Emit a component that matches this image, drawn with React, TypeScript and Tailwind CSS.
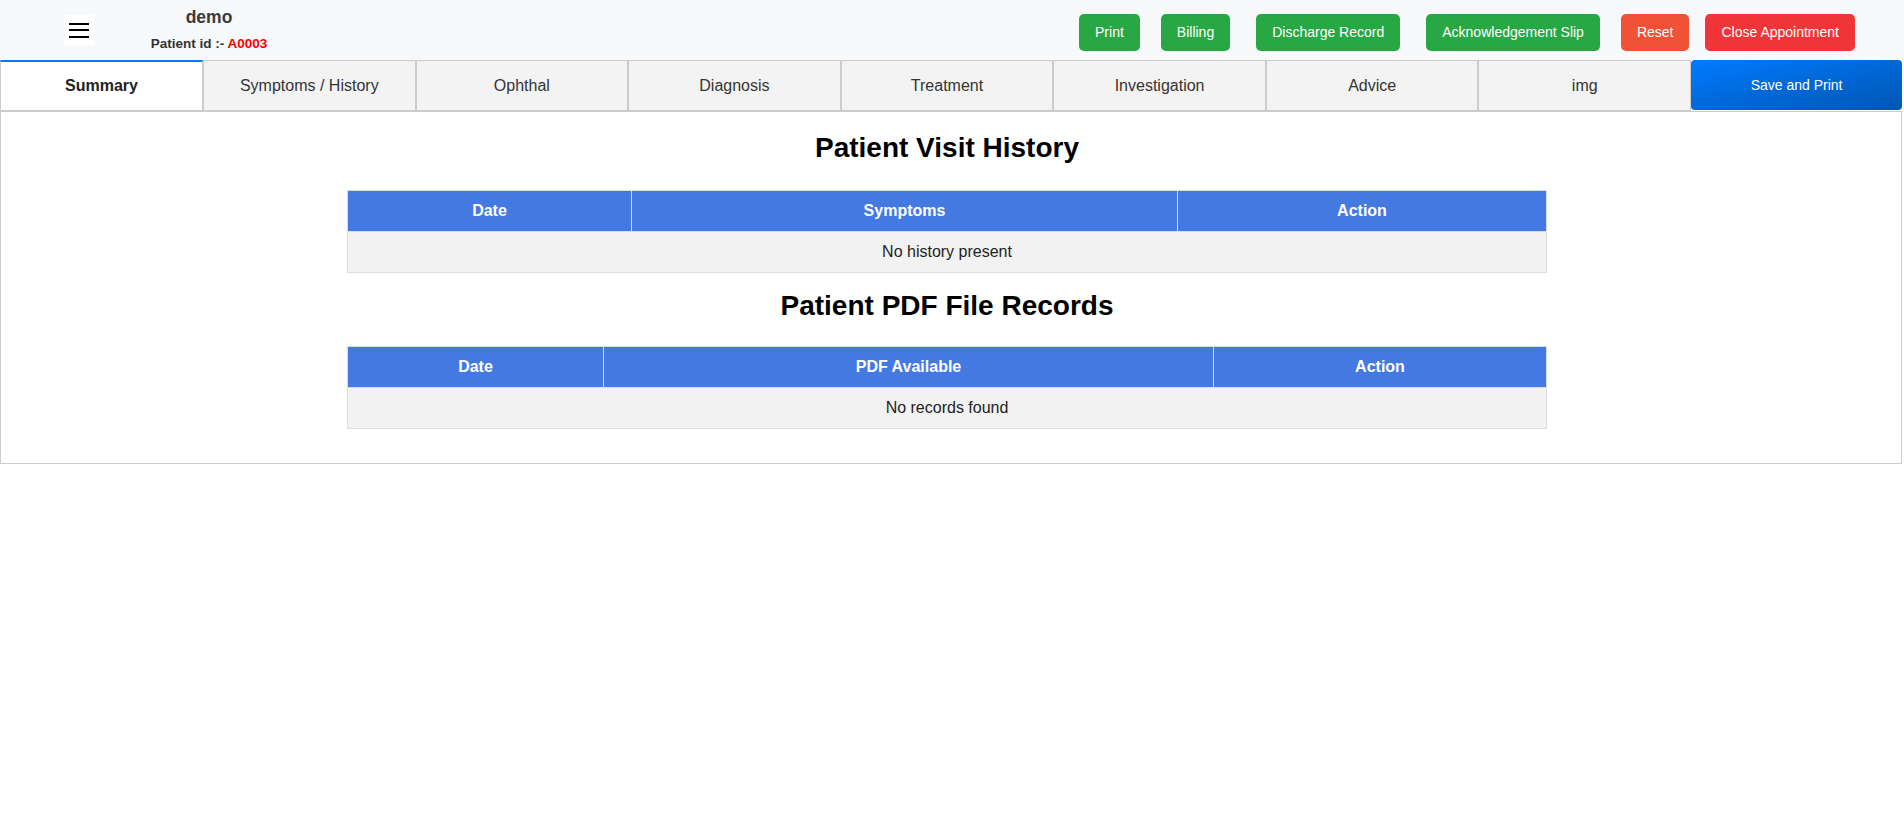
const tabs = ["Symptoms / History", "Ophthal", "Diagnosis", "Treatment", "Investigation", "Advice", "img"];

function HistoryTable({ cols, widths, empty }: { cols: string[]; widths: string[]; empty: string }) {
  return (
    <table className="mx-auto w-[1199px] table-fixed border-collapse border border-[#dddddd] text-[16px]">
      <thead>
        <tr className="h-[41px] bg-[#4479e1] text-white">
          {cols.map((c, i) => (
            <th key={c} className={`${widths[i]} border border-[#dddddd] font-bold`}>{c}</th>
          ))}
        </tr>
      </thead>
      <tbody>
        <tr className="h-[41px] bg-[#f2f2f2] text-[#222]">
          <td colSpan={3} className="border border-[#dddddd] text-center">{empty}</td>
        </tr>
      </tbody>
    </table>
  );
}

export default function App() {
  return (
    <div className="min-h-[817px] bg-white font-['Liberation_Sans',Arial,sans-serif]">
      {/* top bar */}
      <div className="flex h-[60px] bg-[#f8f9fa]">
        <button className="mt-[15px] ml-[64px] flex h-[30px] w-[30px] flex-col items-center justify-center gap-[4.5px] bg-white">
          <span className="block h-[2px] w-[20px] bg-black" />
          <span className="block h-[2px] w-[20px] bg-black" />
          <span className="block h-[2px] w-[20px] bg-black" />
        </button>
        <div className="ml-[40px] flex w-[150px] flex-col items-center pt-[6px]">
          <div className="text-[17.5px] leading-[22px] font-bold text-[#3a3a3a]">demo</div>
          <div className="mt-[8px] text-[13.5px] leading-[16px] font-bold text-[#333]">
            Patient id :- <span className="text-[#ff0000]">A0003</span>
          </div>
        </div>
        <div className="mt-[14px] ml-auto flex items-start pr-[49px] text-[14px] text-white">
          <button className="h-[37px] rounded-[5px] bg-[#28a745] px-4">Print</button>
          <button className="ml-[21px] h-[37px] rounded-[5px] bg-[#28a745] px-4">Billing</button>
          <button className="ml-[26px] h-[37px] rounded-[5px] bg-[#28a745] px-4">Discharge Record</button>
          <button className="ml-[26px] h-[37px] rounded-[5px] bg-[#28a745] px-4">Acknowledgement Slip</button>
          <button className="ml-[21px] h-[37px] rounded-[5px] bg-[#f05236] px-4">Reset</button>
          <button className="ml-[16px] h-[37px] rounded-[5px] bg-[#ef3537] px-4">Close Appointment</button>
        </div>
      </div>

      {/* tabs */}
      <div className="flex h-[51px] w-[1902px] text-[16px]">
        <div className="flex w-[203px] items-center justify-center border border-t-2 border-[#cccccc] border-t-[#007bff] bg-white font-bold text-[#222]">
          Summary
        </div>
        {tabs.map((t) => (
          <div key={t} className="flex flex-1 items-center justify-center border border-[#cccccc] bg-[#f3f3f3] text-[#333]">
            {t}
          </div>
        ))}
        <button className="h-[50px] w-[211px] rounded-[4px] bg-gradient-to-br from-[#007bff] to-[#0056b3] text-[14px] text-white">
          Save and Print
        </button>
      </div>

      {/* content */}
      <div className="w-[1902px] border border-[#cccccc] pt-[20px] pr-[8px] pb-[34px]">
        <h2 className="text-center text-[28px] leading-[32px] font-bold text-black">Patient Visit History</h2>
        <div className="mt-[26px]">
          <HistoryTable
            cols={["Date", "Symptoms", "Action"]}
            widths={["w-[284px]", "w-[546px]", "w-[369px]"]}
            empty="No history present"
          />
        </div>
        <h2 className="mt-[17px] text-center text-[28px] leading-[32px] font-bold text-black">Patient PDF File Records</h2>
        <div className="mt-[24px]">
          <HistoryTable
            cols={["Date", "PDF Available", "Action"]}
            widths={["w-[256px]", "w-[610px]", "w-[333px]"]}
            empty="No records found"
          />
        </div>
      </div>
    </div>
  );
}
